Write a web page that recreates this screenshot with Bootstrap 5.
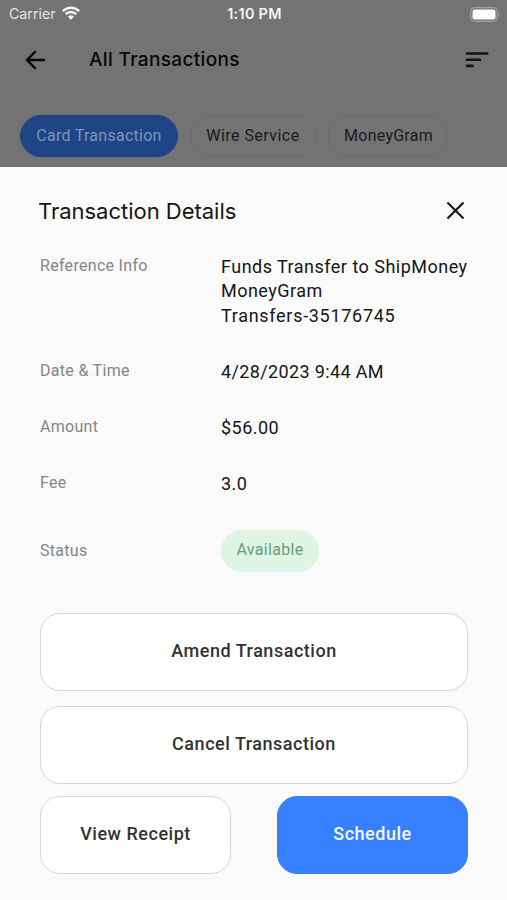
<!DOCTYPE html>
<html lang="en">
<head>
<meta charset="utf-8">
<meta name="viewport" content="width=device-width, initial-scale=1">
<title>Transaction Details</title>
<link href="https://cdn.jsdelivr.net/npm/bootstrap@5.3.0/dist/css/bootstrap.min.css" rel="stylesheet">
<style>
body{width:507px;height:900px;overflow:hidden;background:#fafafa;color:#161616;font-family:Roboto,"Liberation Sans",sans-serif}
.ui-font{font-family:Inter,"Liberation Sans",sans-serif}
.backdrop-area{height:167px;background:#737373}
.status-bar{height:28px;padding:0 7px 0 9px;color:#f4f4f4;line-height:28px}
.status-bar>div{flex:1 1 0}
.carrier{font-size:14.2px;letter-spacing:0;color:#e4e4e4}
.wifi{margin:0 0 2px 5px}
.clock{font-size:14.4px;font-weight:600;letter-spacing:.3px;white-space:nowrap}
.app-bar{height:67px;padding:0 18px 3px 25px;border-bottom:1px solid #6f6f6f}
.app-title{font-size:19px;font-weight:500;letter-spacing:.35px;color:#080808;margin-left:44px;line-height:24px}
.chips{padding:20px 20px 0;gap:12px}
.chip{height:42px;border-radius:21px;border:1px solid #6c6c6c;font-size:16px;letter-spacing:.45px;color:#1b1b1b;white-space:nowrap}
.chip-card{width:158px;background:#1d4587;border-color:#1d4587;color:#8194b3;letter-spacing:.27px}
.chip-wire{width:126px}
.chip-gram{width:121px;letter-spacing:.25px}
.sheet{height:733px;padding:0 39px 0 40px}
.sheet-head{height:89px;padding:0 2px 1px 0}
.sheet-title{font-size:22px;letter-spacing:-.02px;margin-left:-2px;line-height:28px}
.field{display:grid;grid-template-columns:181px 1fr;height:56.2px}
.field-ref{height:105px}
.field dt{font-weight:400;font-size:16px;line-height:20px;letter-spacing:.3px;color:#858587}
.field dd{margin:0;font-size:18px;line-height:24.4px;letter-spacing:.48px;white-space:nowrap}
.field:not(.field-status) dd{margin-top:-1px}
.ref-number{letter-spacing:.7px}
.field .stamp{letter-spacing:.36px}
.field-status{height:42px}
.pill{width:98px;height:42px;border-radius:21px;background:#dff5e3;color:#689d7b;font-size:16px;letter-spacing:.33px;padding-bottom:1px}
.actions{margin-top:41px;row-gap:15px}
.action{height:78px;border:1.5px solid #d5d7d8;border-radius:20px;background:#fff;color:#303336;font-size:18px;font-weight:500;letter-spacing:.52px;padding:0 0 3px}
.action-main{background:#3680ff;border-color:#3680ff;color:#f5f9ff}
.pair{margin-top:-3px}
.pair .action{width:191px}
</style>
<script src="https://cdn.jsdelivr.net/npm/bootstrap@5.3.0/dist/js/bootstrap.bundle.min.js"></script>
</head>
<body>
<header class="backdrop-area">
  <div class="status-bar ui-font d-flex align-items-center">
    <div class="d-flex align-items-center">
      <span class="carrier">Carrier</span>
      <svg class="wifi" width="20" height="14" viewBox="-1 0 20 14" fill="none" stroke="#f4f4f4" stroke-width="2.4"><path d="M.8 5.200C5.400.6 12.600.6 17.200 5.200M3.700 8.200C6.700 5.200 11.300 5.200 14.300 8.200"/><path d="M9 13.700 5.900 10.500Q9 7.800 12.100 10.500Z" fill="#f4f4f4" stroke="none"/></svg>
    </div>
    <span class="clock">1:10 PM</span>
    <div class="d-flex justify-content-end">
      <svg width="30" height="15" viewBox="0 0 30 15"><rect x=".7" y=".7" width="26.600" height="13.600" rx="4" fill="none" stroke="#a2a2a2" stroke-width="1.200"/><rect x="2.500" y="2.500" width="23" height="10" rx="2.300" fill="#fff"/><path d="M28.600 5.200Q30.400 7.500 28.600 9.800Z" fill="#a2a2a2"/></svg>
    </div>
  </div>
  <div class="app-bar d-flex align-items-center">
    <svg width="20" height="20" viewBox="0 0 20 20" fill="none" stroke="#080808" stroke-width="2.400"><path d="M20 10H2.200M10.800 1.200 2 10l8.800 8.800"/></svg>
    <span class="app-title ui-font">All Transactions</span>
    <svg class="ms-auto" width="24" height="18" viewBox="0 0 24 18" stroke="#141414" stroke-width="2.600" stroke-linecap="round"><path d="M2 2.500H22.200M2 8.700H14.900M2 14.900H7.500"/></svg>
  </div>
  <nav class="chips d-flex">
    <span class="chip chip-card d-flex align-items-center justify-content-center">Card Transaction</span>
    <span class="chip chip-wire d-flex align-items-center justify-content-center">Wire Service</span>
    <span class="chip chip-gram d-flex align-items-center justify-content-center">MoneyGram</span>
  </nav>
</header>
<main class="sheet">
  <div class="sheet-head d-flex align-items-center justify-content-between">
    <h1 class="sheet-title ui-font fw-normal mb-0">Transaction Details</h1>
    <svg width="20" height="20" viewBox="0 0 20 20" fill="none" stroke="#161616" stroke-width="2.200"><path d="M1.500 1.500l16 16M17.500 1.500l-16 16"/></svg>
  </div>
  <dl class="mb-0">
    <div class="field field-ref"><dt>Reference Info</dt><dd>Funds Transfer to ShipMoney<br>MoneyGram<br><span class="ref-number">Transfers-35176745</span></dd></div>
    <div class="field"><dt>Date &amp; Time</dt><dd class="stamp">4/28/2023 9:44 AM</dd></div>
    <div class="field"><dt>Amount</dt><dd>$56.00</dd></div>
    <div class="field"><dt>Fee</dt><dd>3.0</dd></div>
    <div class="field field-status align-items-center"><dt>Status</dt><dd><span class="pill d-flex align-items-center justify-content-center">Available</span></dd></div>
  </dl>
  <div class="actions d-grid">
    <button class="btn action">Amend Transaction</button>
    <button class="btn action">Cancel Transaction</button>
    <div class="pair d-flex justify-content-between">
      <button class="btn action">View Receipt</button>
      <button class="btn action action-main">Schedule</button>
    </div>
  </div>
</main>
</body>
</html>
